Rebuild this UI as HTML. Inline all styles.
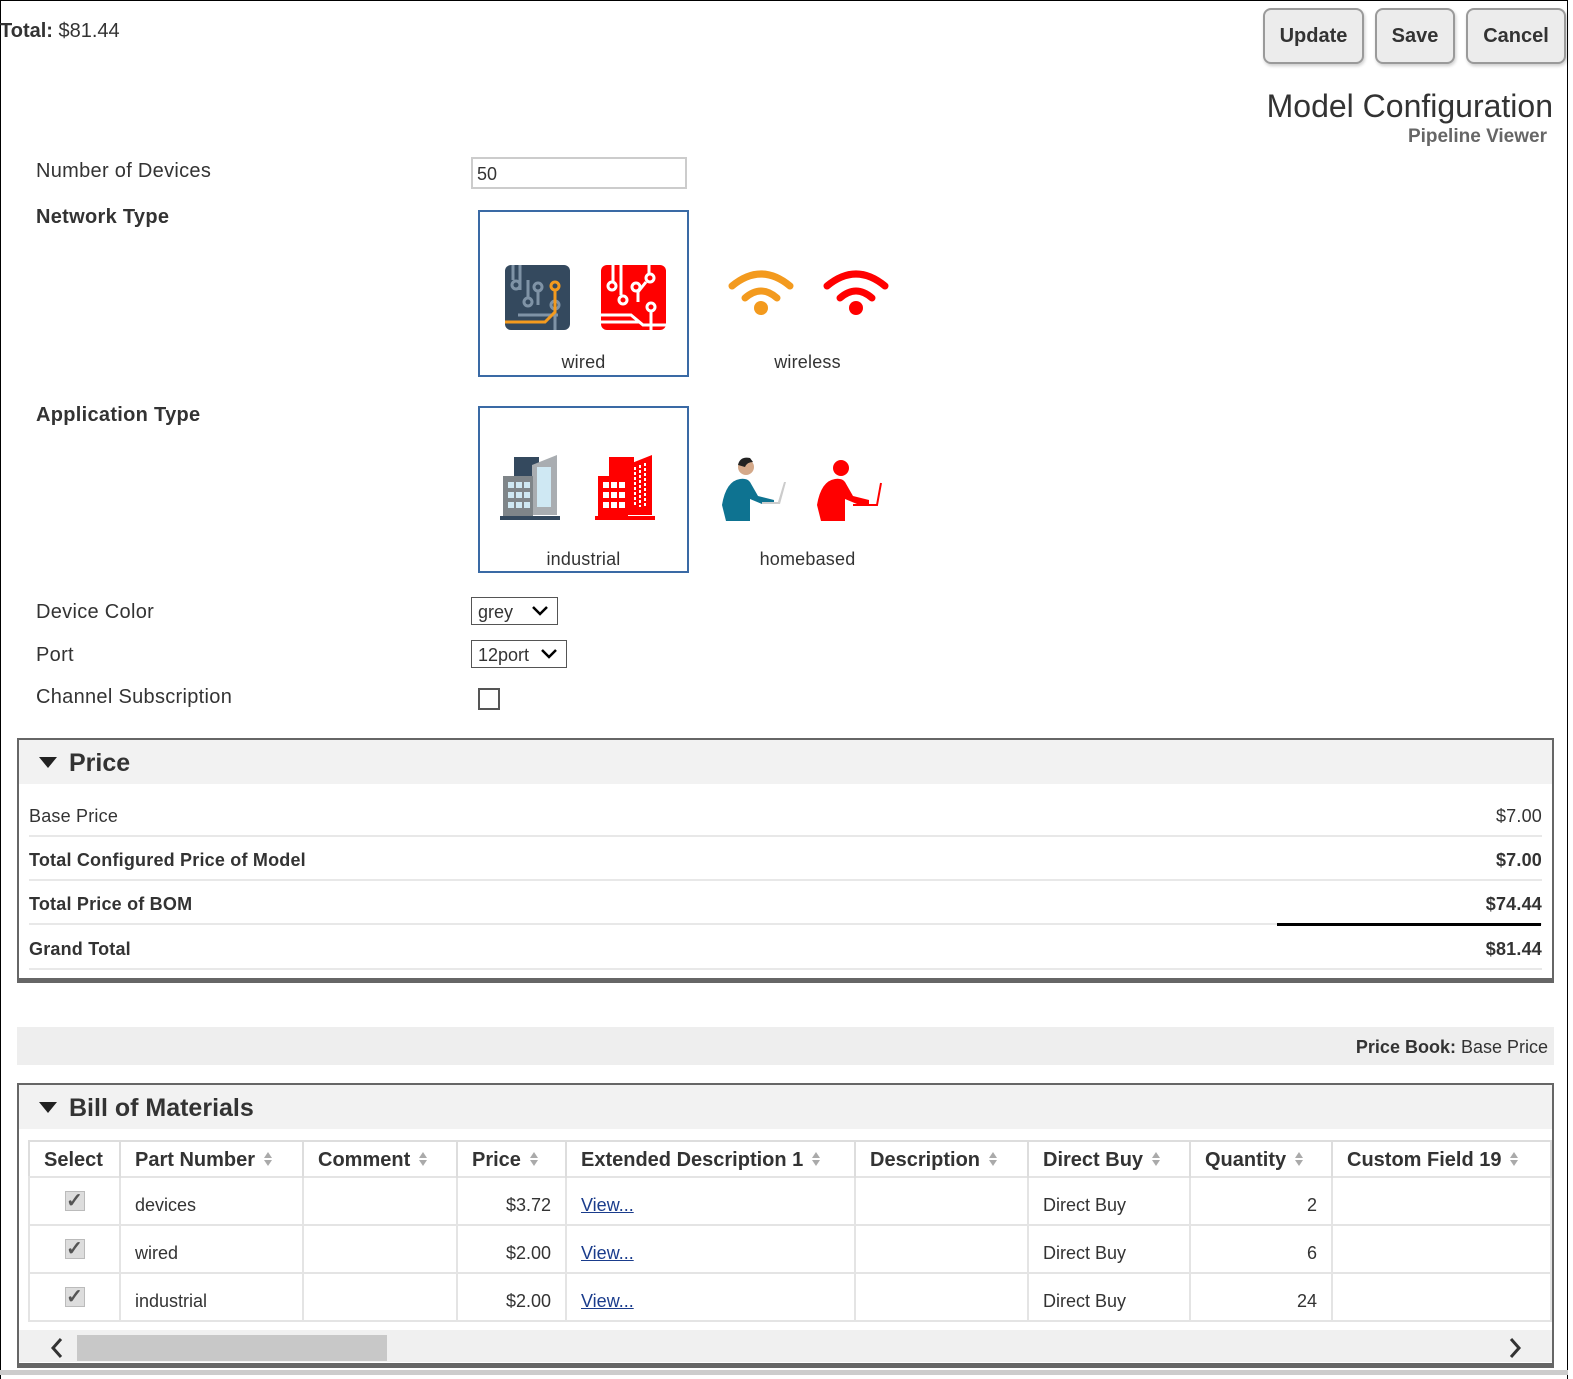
<!DOCTYPE html>
<html><head><meta charset="utf-8"><style>
*{box-sizing:border-box;margin:0;padding:0}
body{width:1573px;height:1379px;position:relative;font-family:"Liberation Sans",Arial,sans-serif;color:#333;background:#fff;overflow:hidden}
.a{position:absolute}
.frame{left:0;top:0;width:1568px;height:1379px;border-left:1px solid #000;border-top:1px solid #000;border-right:1px solid #000}
.btn{top:8px;height:56px;border:2px solid #9a9a9a;border-radius:8px;background:#ececec;font-weight:bold;font-size:20px;color:#333;text-align:center;line-height:52px;box-shadow:1px 2px 3px rgba(0,0,0,.2)}
.lbl{left:36px;font-size:20px;letter-spacing:.3px;top:2px}
.b{font-weight:bold}
.opt{width:211px;height:167px;border:2px solid #3a6aa5}
.cap{font-size:18px;width:211px;text-align:center;letter-spacing:.2px}
.sel{border:1px solid #555;height:28px;font-size:18px;padding-left:6px;line-height:26px}
.box{left:17px;width:1537px;border:2px solid #666;border-bottom:5px solid #666}
.hd{background:#f2f2f2;height:44px;font-size:25px;font-weight:bold;padding-left:50px;line-height:46px;position:relative}
.hd:before{content:"";position:absolute;left:20px;top:17px;border-left:9px solid transparent;border-right:9px solid transparent;border-top:11px solid #222}
.pr{position:absolute;left:10px;right:10px;height:44px;border-bottom:2px solid #e8e8e8;font-size:18px;line-height:46px;letter-spacing:.2px}
.pr span{position:absolute;right:0}
table{border-collapse:collapse;font-size:18px}
th{font-size:20px;font-weight:bold;text-align:left;padding-left:14px;height:36px;border-right:2px solid #ddd;padding-top:3px}
td{height:48px;border:2px solid #e4e4e4;padding:0 14px;padding-top:8px}
.s{display:inline-block;width:10px;height:16px;margin-left:8px;vertical-align:-1px}
.ck{display:inline-block;width:20px;height:20px;border:1px solid #bbb;background:#ddd;color:#555;font-size:20px;line-height:18px;text-align:center;font-weight:bold}
a{color:#1a3c8c;text-decoration:underline}
</style></head><body>
<div class="a frame"></div>
<div class="a" style="left:0;top:20px;font-size:20px"><b>Total:</b> $81.44</div>
<div class="a btn" style="left:1263px;width:101px">Update</div>
<div class="a btn" style="left:1375px;width:80px">Save</div>
<div class="a btn" style="left:1466px;width:100px">Cancel</div>
<div class="a" style="right:20px;top:88px;font-size:32px;color:#333">Model Configuration</div>
<div class="a" style="right:26px;top:126px;font-size:19px;font-weight:bold;color:#666">Pipeline Viewer</div>

<div class="a lbl" style="top:160px">Number of Devices</div>
<div class="a" style="left:471px;top:157px;width:216px;height:32px;border:2px solid #ccc;font-size:18px;padding:5px 4px">50</div>
<div class="a lbl b" style="top:206px">Network Type</div>
<div class="a opt" style="left:478px;top:210px"></div>
<svg class="a" style="left:505px;top:265px" width="65" height="65" viewBox="0 0 65 65"><rect width="65" height="65" rx="6" fill="#34495e"/><g fill="none" stroke="#7f93a6" stroke-width="3"><path d="M8 0v15M15 0v25M13 50h40"/><circle cx="11" cy="20" r="4"/><circle cx="23" cy="37" r="4"/><path d="M23 33V15M50 65V45"/><circle cx="33" cy="22" r="4"/><circle cx="50" cy="40" r="4"/><path d="M33 26v14"/></g><path d="M0 57h40l10-10V25" fill="none" stroke="#f39a1e" stroke-width="3"/><circle cx="50" cy="21" r="4" fill="none" stroke="#f39a1e" stroke-width="3"/></svg>
<svg class="a" style="left:601px;top:265px" width="65" height="65" viewBox="0 0 65 65"><rect width="65" height="65" rx="6" fill="#f00"/><g fill="none" stroke="#fff" stroke-width="3"><path d="M12 0v17M20 0v30M0 50h30l12 10h23M0 57h38M48 0v10"/><circle cx="11" cy="21" r="4"/><circle cx="22" cy="35" r="4"/><circle cx="35" cy="22" r="4"/><circle cx="49" cy="13" r="4"/><circle cx="50" cy="42" r="4"/><path d="M50 46v19M45 17l-8 10v10"/></g></svg>
<svg class="a" style="left:727px;top:268px" width="68" height="48" viewBox="0 0 68 48"><g fill="none" stroke="#f39a1e" stroke-width="7" stroke-linecap="round"><path d="M5 18Q34-6 63 18"/><path d="M18 30Q34 16 50 30"/></g><circle cx="34" cy="40" r="7" fill="#f39a1e"/></svg>
<svg class="a" style="left:822px;top:268px" width="68" height="48" viewBox="0 0 68 48"><g fill="none" stroke="#f00" stroke-width="7" stroke-linecap="round"><path d="M5 18Q34-6 63 18"/><path d="M18 30Q34 16 50 30"/></g><circle cx="34" cy="40" r="7" fill="#f00"/></svg>
<div class="a cap" style="left:478px;top:352px">wired</div>
<div class="a cap" style="left:702px;top:352px">wireless</div>

<div class="a lbl b" style="top:404px">Application Type</div>
<div class="a opt" style="left:478px;top:406px"></div>
<svg class="a" style="left:500px;top:455px" width="60" height="66" viewBox="0 0 60 66"><rect x="14" y="2" width="25" height="22" fill="#34495e"/><path d="M32 10l25-10v60H32z" fill="#a9adb1"/><rect x="3" y="21" width="30" height="41" fill="#7f8589"/><g fill="#cfe8f3"><rect x="8" y="27" width="6" height="6"/><rect x="16" y="27" width="6" height="6"/><rect x="24" y="27" width="6" height="6"/><rect x="8" y="37" width="6" height="6"/><rect x="16" y="37" width="6" height="6"/><rect x="24" y="37" width="6" height="6"/><rect x="8" y="47" width="6" height="6"/><rect x="16" y="47" width="6" height="6"/><rect x="24" y="47" width="6" height="6"/><rect x="37" y="12" width="14" height="40"/></g><rect x="0" y="61" width="60" height="4" fill="#34495e"/></svg>
<svg class="a" style="left:595px;top:455px" width="60" height="66" viewBox="0 0 60 66"><rect x="14" y="2" width="25" height="22" fill="#f00"/><path d="M32 10l25-10v60H32z" fill="#f00"/><rect x="3" y="21" width="30" height="41" fill="#f00"/><g fill="#fff"><rect x="8" y="27" width="6" height="6"/><rect x="16" y="27" width="6" height="6"/><rect x="24" y="27" width="6" height="6"/><rect x="8" y="37" width="6" height="6"/><rect x="16" y="37" width="6" height="6"/><rect x="24" y="37" width="6" height="6"/><rect x="8" y="47" width="6" height="6"/><rect x="16" y="47" width="6" height="6"/><rect x="24" y="47" width="6" height="6"/></g><g stroke="#fff" stroke-width="2" stroke-dasharray="3 2"><path d="M40 12v40M45 10v42M50 8v44"/></g><rect x="0" y="61" width="60" height="4" fill="#f00"/></svg>
<svg class="a" style="left:720px;top:457px" width="68" height="66" viewBox="0 0 68 66"><circle cx="26" cy="10" r="8" fill="#d4a98a"/><path d="M18 8q2-9 12-7l3 4q-6 0-8 5z" fill="#222"/><path d="M20 22q-14 2-18 26l4 16h24V42l12 5h12v-4l-16-4-8-14q-3-4-10-3z" fill="#0e7391"/><path d="M42 47h18l6-22h-2l-6 20H42z" fill="#ccc"/></svg>
<svg class="a" style="left:815px;top:457px" width="68" height="66" viewBox="0 0 68 66"><circle cx="26" cy="11" r="8" fill="#f00"/><path d="M20 22q-14 2-18 26l4 16h24V42l12 5h12v-4l-16-4-8-14q-3-4-10-3z" fill="#f00"/><path d="M38 48h24l4-22" stroke="#f00" stroke-width="2" fill="none"/></svg>
<div class="a cap" style="left:478px;top:549px">industrial</div>
<div class="a cap" style="left:702px;top:549px">homebased</div>

<div class="a lbl" style="top:601px">Device Color</div>
<div class="a sel" style="left:471px;top:597px;width:87px;padding-top:1px">grey<svg class="a" style="right:8px;top:7px" width="18" height="12"><path d="M2 2l7 7 7-7" stroke="#000" stroke-width="2.5" fill="none"/></svg></div>
<div class="a lbl" style="top:644px">Port</div>
<div class="a sel" style="left:471px;top:640px;width:96px;padding-top:1px">12port<svg class="a" style="right:8px;top:7px" width="18" height="12"><path d="M2 2l7 7 7-7" stroke="#000" stroke-width="2.5" fill="none"/></svg></div>
<div class="a lbl" style="top:686px">Channel Subscription</div>
<div class="a" style="left:478px;top:688px;width:22px;height:22px;border:2px solid #555"></div>

<div class="a box" style="top:738px;height:245px">
<div class="hd">Price</div>
<div class="pr" style="top:53px">Base Price<span>$7.00</span></div>
<div class="pr b" style="top:97px">Total Configured Price of Model<span>$7.00</span></div>
<div class="pr b" style="top:141px">Total Price of BOM<span>$74.44</span></div>
<div class="a" style="left:1258px;top:183px;width:264px;height:3px;background:#000"></div>
<div class="pr b" style="top:186px">Grand Total<span>$81.44</span></div>
</div>

<div class="a" style="left:17px;top:1027px;width:1537px;height:38px;background:#eee;font-size:18px;text-align:right;padding-right:6px;line-height:40px"><b>Price Book:</b> Base Price</div>

<div class="a box" style="top:1083px;height:285px">
<div class="hd">Bill of Materials</div>
<table class="a" style="left:9px;top:55px;width:1524px">
<tr style="border:2px solid #ddd"><th style="width:91px;padding-left:14px">Select</th><th style="width:183px">Part Number<svg class="s" viewBox="0 0 10 16"><path d="M5 1l4 6H1zM5 15l4-6H1z" fill="#aaa"/></svg></th><th style="width:154px">Comment<svg class="s" viewBox="0 0 10 16"><path d="M5 1l4 6H1zM5 15l4-6H1z" fill="#aaa"/></svg></th><th style="width:109px">Price<svg class="s" viewBox="0 0 10 16"><path d="M5 1l4 6H1zM5 15l4-6H1z" fill="#aaa"/></svg></th><th style="width:289px">Extended Description 1<svg class="s" viewBox="0 0 10 16"><path d="M5 1l4 6H1zM5 15l4-6H1z" fill="#aaa"/></svg></th><th style="width:173px">Description<svg class="s" viewBox="0 0 10 16"><path d="M5 1l4 6H1zM5 15l4-6H1z" fill="#aaa"/></svg></th><th style="width:162px">Direct Buy<svg class="s" viewBox="0 0 10 16"><path d="M5 1l4 6H1zM5 15l4-6H1z" fill="#aaa"/></svg></th><th style="width:142px">Quantity<svg class="s" viewBox="0 0 10 16"><path d="M5 1l4 6H1zM5 15l4-6H1z" fill="#aaa"/></svg></th><th>Custom Field 19<svg class="s" viewBox="0 0 10 16"><path d="M5 1l4 6H1zM5 15l4-6H1z" fill="#aaa"/></svg></th></tr>
<tr><td style="text-align:center;padding:0"><span class="ck">✓</span></td><td>devices</td><td></td><td style="text-align:right">$3.72</td><td><a>View...</a></td><td></td><td>Direct Buy</td><td style="text-align:right">2</td><td></td></tr>
<tr><td style="text-align:center;padding:0"><span class="ck">✓</span></td><td>wired</td><td></td><td style="text-align:right">$2.00</td><td><a>View...</a></td><td></td><td>Direct Buy</td><td style="text-align:right">6</td><td></td></tr>
<tr><td style="text-align:center;padding:0"><span class="ck">✓</span></td><td>industrial</td><td></td><td style="text-align:right">$2.00</td><td><a>View...</a></td><td></td><td>Direct Buy</td><td style="text-align:right">24</td><td></td></tr>
</table>
<div class="a" style="left:0;right:0;top:245px;height:32px;background:#f0f0f0"></div>
<div class="a" style="left:58px;top:250px;width:310px;height:26px;background:#c8c8c8"></div>
<svg class="a" style="left:30px;top:252px" width="16" height="22"><path d="M12 2L4 11l8 9" stroke="#333" stroke-width="3" fill="none"/></svg>
<svg class="a" style="left:1488px;top:252px" width="16" height="22"><path d="M4 2l8 9-8 9" stroke="#333" stroke-width="3" fill="none"/></svg>
</div>
<div class="a" style="left:0;top:1370px;width:1568px;height:5px;background:#ccc"></div>
</body></html>
